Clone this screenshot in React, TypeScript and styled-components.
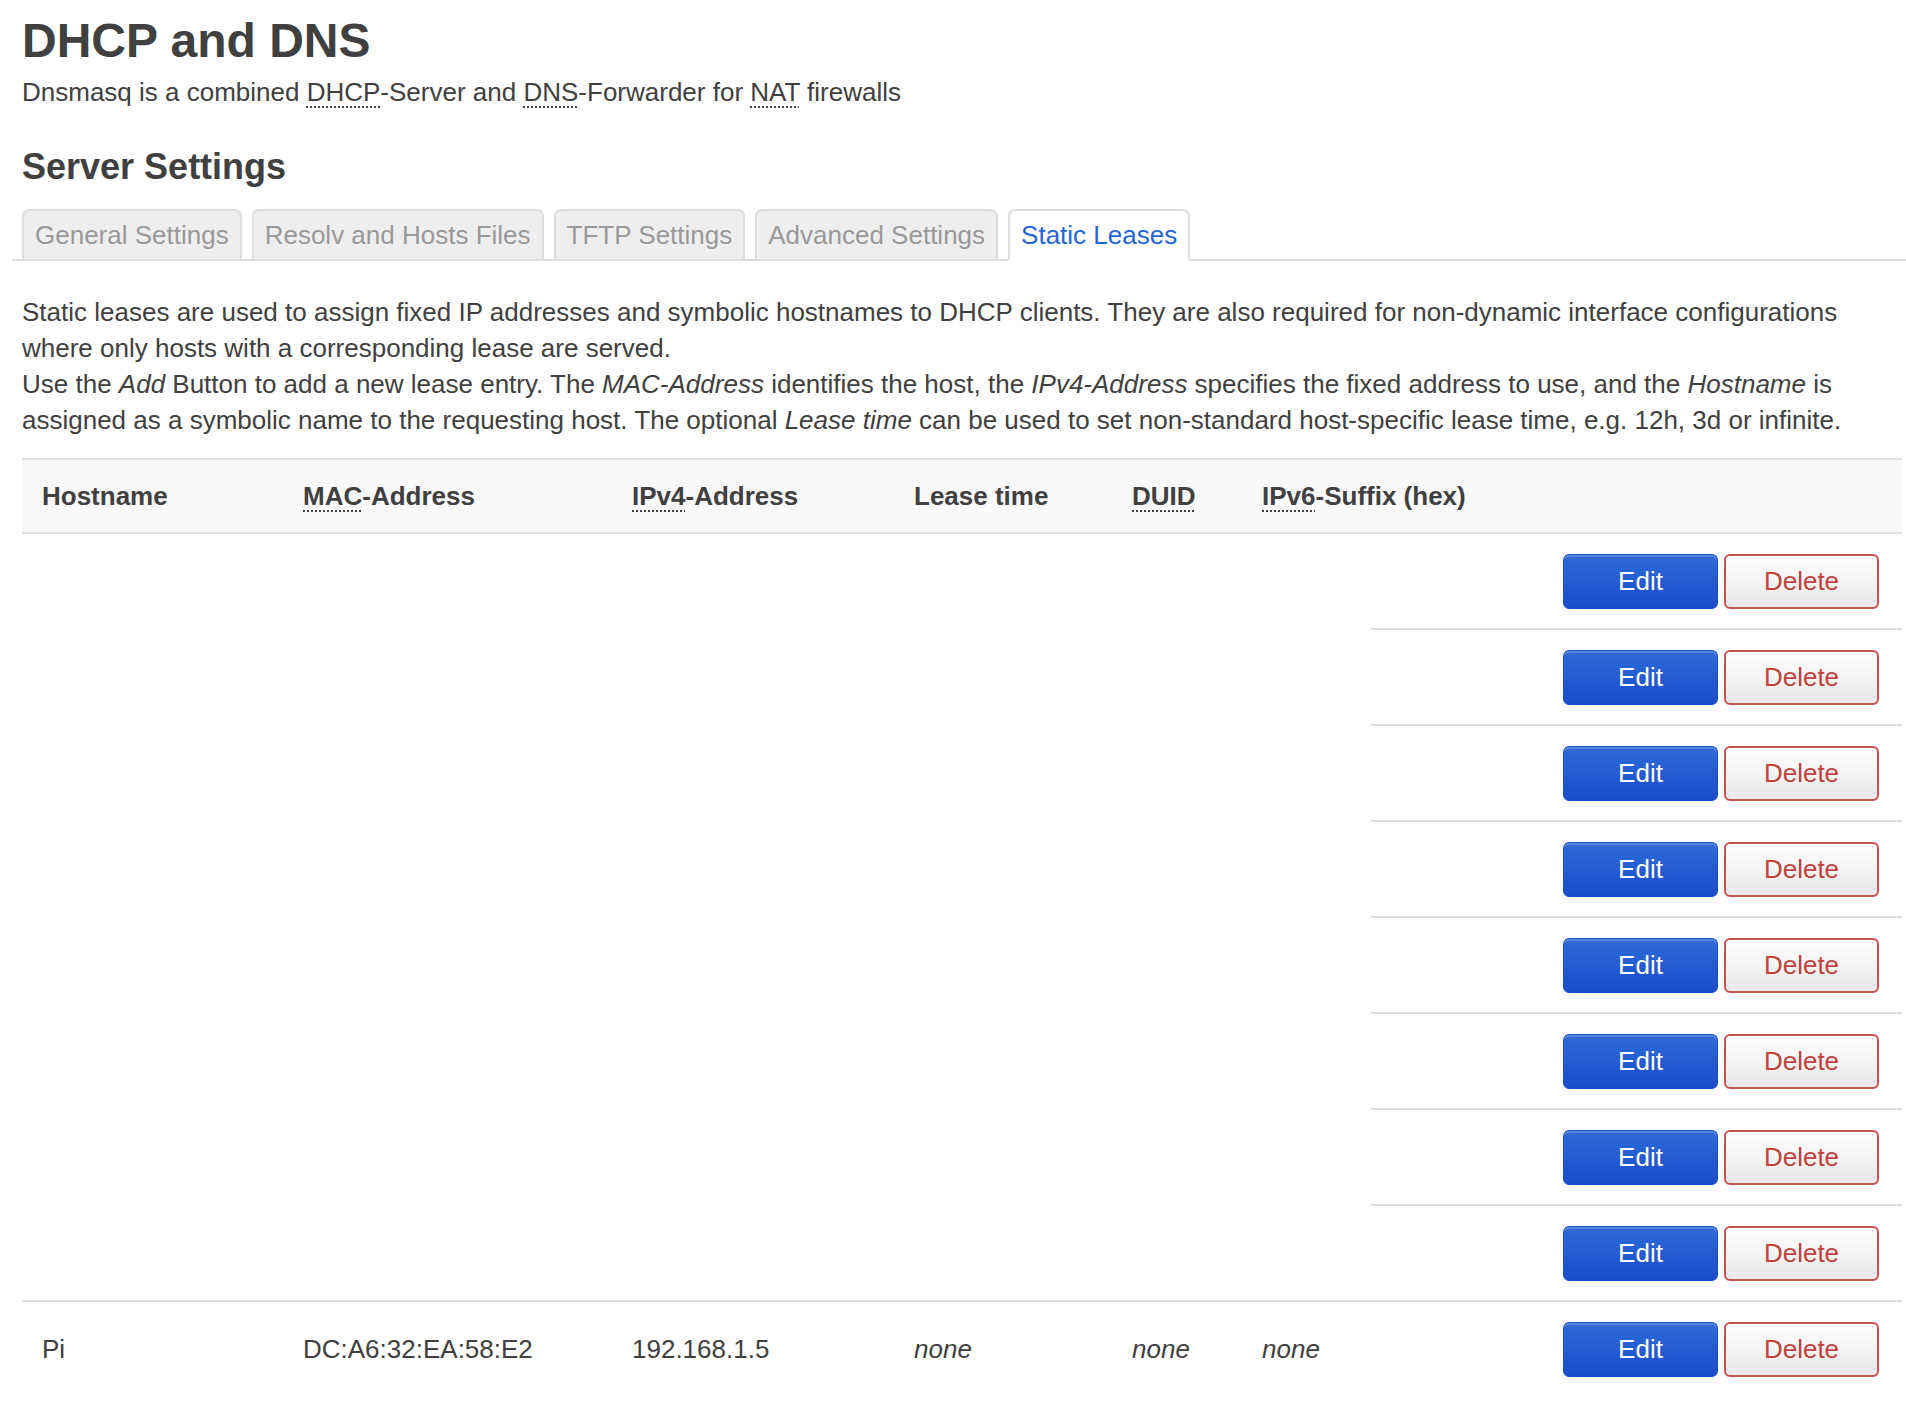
import React from 'react'
import styled, { createGlobalStyle } from 'styled-components'

const GlobalStyle = createGlobalStyle`
  body {
    margin: 0;
    background: #fff;
    color: #404040;
    font-family: "Liberation Sans", Arial, Helvetica, sans-serif;
    font-size: 26px;
    line-height: 36px;
  }
`

const tabs = ['General Settings', 'Resolv and Hosts Files', 'TFTP Settings', 'Advanced Settings', 'Static Leases']

const leases = [
  ...Array.from({ length: 8 }, () => null),
  { host: 'Pi', mac: 'DC:A6:32:EA:58:E2', ip: '192.168.1.5', lease: 'none', duid: 'none', ipv6: 'none' },
]

const App: React.FC = () => {
  return (
    <Page>
      <GlobalStyle />
      <Title>DHCP and DNS</Title>
      <Lead>
        Dnsmasq is a combined <Abbr title="Dynamic Host Configuration Protocol">DHCP</Abbr>-Server and{' '}
        <Abbr title="Domain Name System">DNS</Abbr>-Forwarder for <Abbr title="Network Address Translation">NAT</Abbr> firewalls
      </Lead>
      <Section>Server Settings</Section>
      <TabList>
        {tabs.map((t, i) => (
          <Tab key={t} $active={i === tabs.length - 1}>{t}</Tab>
        ))}
      </TabList>
      <Description>
        Static leases are used to assign fixed IP addresses and symbolic hostnames to DHCP clients. They are also required for non-dynamic interface configurations<br />
        where only hosts with a corresponding lease are served.<br />
        Use the <em>Add</em> Button to add a new lease entry. The <em>MAC-Address</em> identifies the host, the <em>IPv4-Address</em> specifies the fixed address to use, and the <em>Hostname</em> is<br />
        assigned as a symbolic name to the requesting host. The optional <em>Lease time</em> can be used to set non-standard host-specific lease time, e.g. 12h, 3d or infinite.
      </Description>
      <Table>
        <HeadRow>
          <HeadCell>Hostname</HeadCell>
          <HeadCell><Abbr title="Media Access Control">MAC</Abbr>-Address</HeadCell>
          <HeadCell><Abbr title="Internet Protocol Version 4">IPv4</Abbr>-Address</HeadCell>
          <HeadCell>Lease time</HeadCell>
          <HeadCell><Abbr title="The DHCP Unique Identifier">DUID</Abbr></HeadCell>
          <HeadCell><Abbr title="Internet Protocol Version 6">IPv6</Abbr>-Suffix (hex)</HeadCell>
          <HeadCell />
        </HeadRow>
        {leases.map((l, i) => {
          const full = i === 0 || l !== null
          return (
            <Row key={i}>
              <Cell $line={full}>{l?.host}</Cell>
              <Cell $line={full}>{l?.mac}</Cell>
              <Cell $line={full}>{l?.ip}</Cell>
              <Cell $line={full} $italic>{l?.lease}</Cell>
              <Cell $line={full} $italic>{l?.duid}</Cell>
              <Cell $line={full} $italic>{l?.ipv6}</Cell>
              <Actions>
                <EditButton>Edit</EditButton>
                <DeleteButton>Delete</DeleteButton>
              </Actions>
            </Row>
          )
        })}
      </Table>
    </Page>
  )
}

export default App

const Page = styled.div`
  padding: 12px 4px 0 22px;
`

const Title = styled.h2`
  margin: 0;
  font-size: 48px;
  line-height: 58px;
  font-weight: bold;
`

const Lead = styled.div`
  margin-top: 4px;
`

const Abbr = styled.abbr`
  text-decoration: underline dotted;
  text-decoration-thickness: 2px;
  text-underline-offset: 5px;
  cursor: help;
`

const Section = styled.h3`
  margin: 35px 0 0;
  font-size: 36px;
  line-height: 44px;
  font-weight: bold;
`

const TabList = styled.ul`
  list-style: none;
  display: flex;
  gap: 10px;
  margin: 20px -4px 0 -10px;
  padding: 0 0 0 10px;
  border-bottom: 2px solid #ddd;
`

const Tab = styled.li<{ $active?: boolean }>`
  height: 52px;
  box-sizing: border-box;
  padding: 0 11px;
  margin-bottom: -2px;
  display: flex;
  align-items: center;
  border: 2px solid #ddd;
  border-bottom-color: ${p => (p.$active ? '#fff' : '#ddd')};
  border-radius: 7px 7px 0 0;
  background: ${p => (p.$active ? '#fff' : '#eee')};
  color: ${p => (p.$active ? '#2565d6' : '#999')};
  font-size: 26px;
  white-space: nowrap;
`

const Description = styled.p`
  margin: 33px 0 0;
  white-space: nowrap;
`

const Table = styled.div`
  margin-top: 20px;
`

const columns = '261px 329px 282px 218px 130px 129px 1fr'

const HeadRow = styled.div`
  display: grid;
  grid-template-columns: ${columns};
  height: 74px;
  box-sizing: border-box;
  border-top: 2px solid #ddd;
  background: #f9f9f9;
  align-items: center;
`

const HeadCell = styled.div`
  padding-left: 20px;
  font-weight: bold;
  white-space: nowrap;
`

const Row = styled.div`
  display: grid;
  grid-template-columns: ${columns};
  height: 96px;
`

const Cell = styled.div<{ $line?: boolean; $italic?: boolean }>`
  display: flex;
  align-items: center;
  padding-left: 20px;
  border-top: 2px solid ${p => (p.$line ? '#ddd' : 'transparent')};
  font-style: ${p => (p.$italic ? 'italic' : 'normal')};
  white-space: nowrap;
`

const Actions = styled.div`
  display: flex;
  align-items: center;
  justify-content: flex-end;
  gap: 6px;
  padding-right: 23px;
  border-top: 2px solid #ddd;
`

const BaseButton = styled.button`
  width: 155px;
  height: 55px;
  box-sizing: border-box;
  border-radius: 6px;
  font-family: inherit;
  font-size: 26px;
  cursor: pointer;
`

const EditButton = styled(BaseButton)`
  color: #fff;
  border: 1px solid #1d4fc4;
  background: linear-gradient(#2e6cd6, #1a4bcb);
  box-shadow: inset 0 2px 0 rgba(255, 255, 255, 0.18);
`

const DeleteButton = styled(BaseButton)`
  color: #c0433e;
  border: 2px solid #c4514d;
  background: linear-gradient(#fff, #e8e8e8);
`
